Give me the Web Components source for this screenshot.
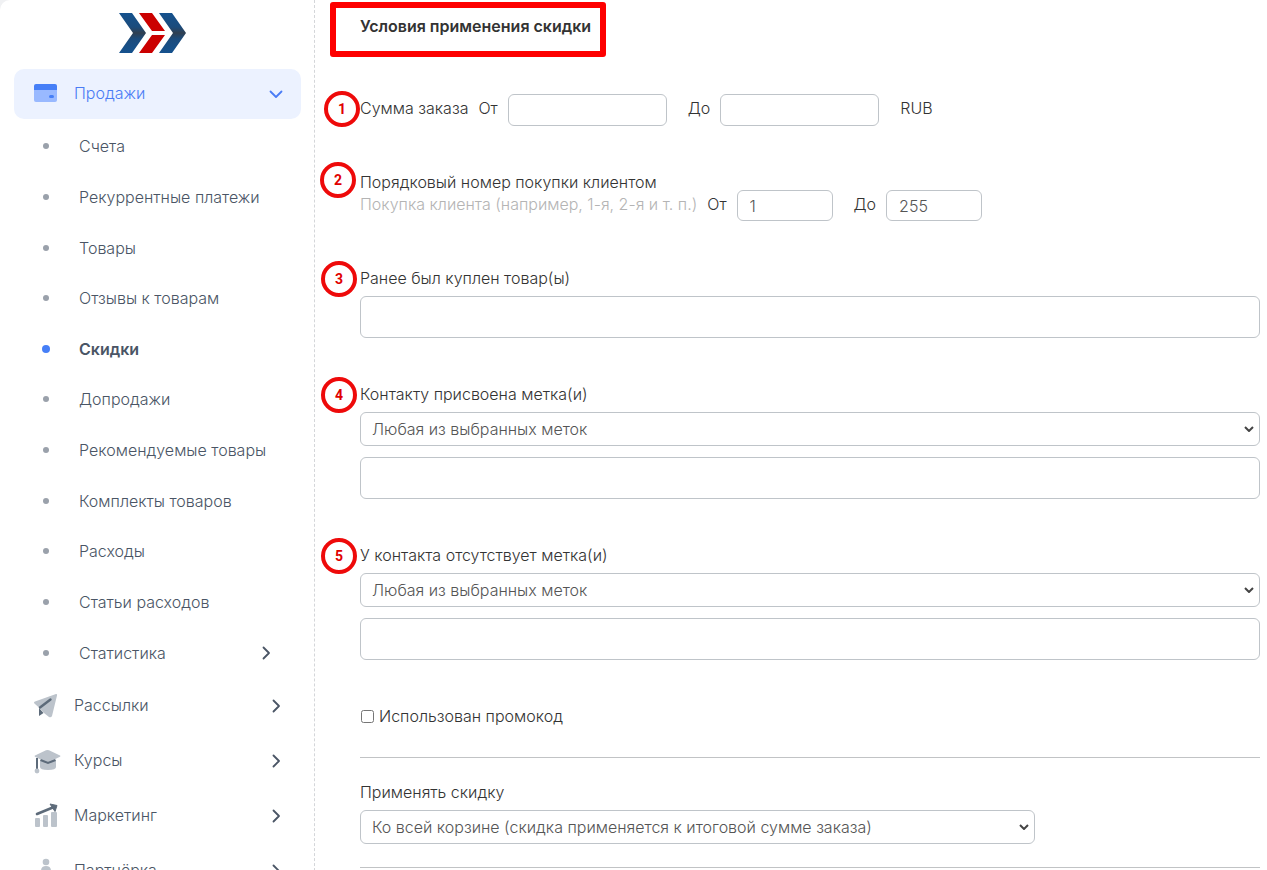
<!DOCTYPE html>
<html lang="ru">
<head>
<meta charset="utf-8">
<title>Скидки</title>
<style>
html, body { margin: 0; background: #f0f1f3; }
body { font: 350 16px/22px Inter, "Open Sans", sans-serif; color: #333; height: 100vh; overflow: hidden; }
</style>
</head>
<body>
<discount-page></discount-page>

<script>
const define = (name, html, setup) => {
  const tpl = document.createElement('template');
  tpl.innerHTML = html;
  customElements.define(name, class extends HTMLElement {
    connectedCallback() {
      if (this.shadowRoot) return;
      this.attachShadow({ mode: 'open' }).append(tpl.content.cloneNode(true));
      if (setup) setup(this, this.shadowRoot);
    }
  });
};

const ICONS = {
  wallet: '<path d="M0 8h23v11a2 2 0 0 1-2 2H2a2 2 0 0 1-2-2z" fill="#99b9ff"/><path d="M2 3h19a2 2 0 0 1 2 2v4H0V5a2 2 0 0 1 2-2z" fill="#467ff7"/><rect x="15" y="14" width="5" height="3" rx="1.500" fill="#467ff7"/>',
  plane: '<path d="M1 8.500 22 1q1.500-.3 1 1.500L18 23q-1 2-3 1l-5-4-4.500-5L1 11q-2-1.500 0-2.500z" fill="#bcc3cb"/><path d="M6 14.500 16.500 6.500" stroke="#5d6b7a" stroke-width="2.400" stroke-linecap="round"/><path d="M5 15l4.500 5L5 23z" fill="#5d6b7a"/>',
  cap: '<path d="M6 12v7q0 3 8 3t8-3v-7z" fill="#bcc3cb"/><path d="M1 7.500 12 2.300q1.500-.6 3 0L26 7.500q1 .6 0 1.200L15 14q-1.500.6-3 0L1 8.700q-1-.6 0-1.200z" fill="#bcc3cb"/><path d="M6.500 12l7.500 3 7.500-3" fill="none" stroke="#5d6b7a" stroke-width="2"/><path d="M3 10v12" stroke="#5d6b7a" stroke-width="2"/><circle cx="3" cy="23" r="2.400" fill="#bcc3cb"/>',
  chart: '<rect x="1" y="15" width="5" height="9" rx="1" fill="#bcc3cb"/><rect x="9" y="12" width="5" height="12" rx="1" fill="#bcc3cb"/><rect x="17" y="9" width="6" height="15" rx="1" fill="#bcc3cb"/><path d="M3 11 20 4" stroke="#5d6b7a" stroke-width="2.600" stroke-linecap="round"/><path d="M16 1l7 1.500-2 6z" fill="#5d6b7a" stroke="#5d6b7a" stroke-linejoin="round"/>',
  partner: '<circle cx="12" cy="4" r="3.300" fill="#bcc3cb"/><path d="M7 18v-5q0-5 5-5t5 5v5z" fill="#bcc3cb"/>'
};

define('brand-logo', `
<style>
:host { display: flex; justify-content: center; }
svg { display: block; }
</style>
<svg width="67" height="40" viewBox="0 0 67 40" role="img" aria-label="Логотип">
  <defs><linearGradient id="b" x2="0" y2="1"><stop offset="0" stop-color="#15528e"/><stop offset=".35" stop-color="#1b4b7c"/><stop offset=".5" stop-color="#303f50"/><stop offset=".65" stop-color="#1b4b7c"/><stop offset="1" stop-color="#15528e"/></linearGradient></defs>
  <path d="M0 0h13l14 20-14 20H0l14-20z" fill="url(#b)"/>
  <path d="M20 0h13l13 18H33zM33 22h13L33 40H20z" fill="#cb0000"/>
  <path d="M40 0h13l14 20-14 20H40l14-20z" fill="url(#b)"/>
</svg>`);

define('chevron-icon', `
<style>
:host { display: block; width: 14px; height: 14px; }
:host([down]) svg { transform: rotate(90deg); }
svg { display: block; }
</style>
<svg width="14" height="14" viewBox="0 0 14 14"><path d="M4.500 1.500 10 7 4.500 12.500" fill="none" stroke="currentColor" stroke-width="1.800" stroke-linecap="round" stroke-linejoin="round"/></svg>`);

define('nav-group', `
<style>
:host { display: block; color: #4a5565; }
a { display: flex; align-items: center; height: 50px; padding: 0 18px 0 20px; border-radius: 10px; color: inherit; text-decoration: none; }
:host([open]) a { background: #ecf2ff; color: #4a7cf5; }
.icon { width: 40px; height: 26px; }
.icon svg { display: block; overflow: visible; }
.label { flex: 1; height: 24px; }
</style>
<a href="#"><span class="icon"></span><span class="label"><slot></slot></span><chevron-icon></chevron-icon></a>`,
(el, root) => {
  root.querySelector('.icon').innerHTML = `<svg width="26" height="26" viewBox="0 0 26 26">${ICONS[el.getAttribute('icon')]}</svg>`;
  root.querySelector('chevron-icon').toggleAttribute('down', el.hasAttribute('open'));
});

define('nav-item', `
<style>
:host { display: grid; color: #4a5565; }
a { display: flex; align-items: center; padding: 0 28px 0 24px; color: inherit; text-decoration: none; }
.dot { width: 16px; display: flex; justify-content: center; margin-right: 25px; }
.dot::before { content: ""; width: 6px; height: 6px; border-radius: 50%; background: #9aa1ab; }
:host([current]) .dot::before { width: 8px; height: 8px; background: #467ff7; }
:host([current]) .label { font-weight: 600; }
.label { flex: 1; }
chevron-icon { display: none; }
:host([more]) chevron-icon { display: block; }
</style>
<a href="#"><span class="dot"></span><span class="label"><slot></slot></span><chevron-icon></chevron-icon></a>`);

define('side-bar', `
<style>
:host { display: block; box-sizing: border-box; padding: 13px 13px 0 14px; border-right: 1px dashed #d4d6d9; }
brand-logo { margin: 0 10px 16px 0; }
nav { display: grid; gap: 5px; }
.sub { display: grid; grid-auto-rows: 1fr; height: 557px; margin: -3px 0 -2px; }
</style>
<brand-logo></brand-logo>
<nav aria-label="Главное меню">
  <nav-group icon="wallet" open>Продажи</nav-group>
  <div class="sub">
    <nav-item>Счета</nav-item>
    <nav-item>Рекуррентные платежи</nav-item>
    <nav-item>Товары</nav-item>
    <nav-item>Отзывы к товарам</nav-item>
    <nav-item current>Скидки</nav-item>
    <nav-item>Допродажи</nav-item>
    <nav-item>Рекомендуемые товары</nav-item>
    <nav-item>Комплекты товаров</nav-item>
    <nav-item>Расходы</nav-item>
    <nav-item>Статьи расходов</nav-item>
    <nav-item more>Статистика</nav-item>
  </div>
  <nav-group icon="plane">Рассылки</nav-group>
  <nav-group icon="cap">Курсы</nav-group>
  <nav-group icon="chart">Маркетинг</nav-group>
  <nav-group icon="partner">Партнёрка</nav-group>
</nav>`);

define('step-badge', `
<style>
:host { position: absolute; left: -39px; top: -6px; box-sizing: border-box; width: 36px; height: 36px; border: 4px solid #ee0a0a; border-radius: 50%; background: #fff; display: flex; align-items: center; justify-content: center; font: 700 14px/20px Roboto, sans-serif; color: #e00000; }
</style>
<slot></slot>`);

const CONTROLS = `
input, select { box-sizing: border-box; margin: 0; border: 1px solid #bfc4c9; border-radius: 6px; background: #fff; color: #555; font: inherit; }
`;

define('range-field', `
<style>
:host { display: flex; align-items: flex-start; line-height: 28px; }
${CONTROLS}
label { margin-right: 10px; }
input { height: 32px; width: 159px; padding: 0 12px; margin-right: 21px; }
:host([compact]) input { height: 31px; width: 96px; }
slot[name=title] { display: block; }
::slotted([slot=title]) { margin-right: 10px; }
</style>
<slot name="title"></slot>
<label for="from">От</label><input id="from" type="text" inputmode="numeric">
<label for="to">До</label><input id="to" type="text" inputmode="numeric">
<slot></slot>`,
(el, root) => {
  root.getElementById('from').value = el.getAttribute('from') || '';
  root.getElementById('to').value = el.getAttribute('to') || '';
});

define('form-field', `
<style>
:host { display: block; }
${CONTROLS}
label { display: block; margin-bottom: 7px; }
select { display: block; width: 100%; height: 34px; padding: 0 24px 0 11px; appearance: none; background: #fff url("data:image/svg+xml,%3Csvg xmlns='http://www.w3.org/2000/svg' width='10' height='6'%3E%3Cpath d='M1 1l4 4 4-4' fill='none' stroke='%23444' stroke-width='2'/%3E%3C/svg%3E") no-repeat right 5px center; }
input { display: block; width: 100%; height: 42px; padding: 0 12px; }
select + input { margin-top: 11px; }
:host([short]) select { width: 75%; }
</style>
<label for="control"><slot></slot></label>`,
(el, root) => {
  const option = el.getAttribute('option');
  if (option) {
    const select = document.createElement('select');
    select.id = 'control';
    select.add(new Option(option));
    root.append(select);
  }
  if (!el.hasAttribute('short')) {
    const input = document.createElement('input');
    input.type = 'text';
    if (option) input.setAttribute('aria-label', 'Метки'); else input.id = 'control';
    root.append(input);
  }
});

define('discount-form', `
<style>
:host { display: block; padding: 2px 7px 0 45px; }
h2 { width: max-content; box-sizing: border-box; margin: 0 0 37px -30px; height: 55px; padding: 7px 9px 0 24px; border: 6px solid #fe0000; border-radius: 3px; font: inherit; font-weight: 600; color: #333; }
section { position: relative; margin-bottom: 45px; }
.order { margin-bottom: 46px; }
.hint { color: #b4b4b4; }
.order range-field { margin-top: -3px; }
.check { display: flex; align-items: center; gap: 5px; margin-bottom: 29px; }
.check input { width: 13px; height: 13px; margin: 0 0 0 1px; }
hr { margin: 0 0 23px; border: 0; border-top: 1px solid #c1c3c5; }
.check + hr { margin-top: 30px; }
.check { margin-bottom: 0; }
.apply { margin-bottom: 23px; }
step-badge.first { left: -36px; top: -3px; }
step-badge.second { left: -40px; top: -9px; }
</style>
<h2>Условия применения скидки</h2>
<section><step-badge class="first">1</step-badge>
  <range-field><span slot="title">Сумма заказа</span>RUB</range-field></section>
<section class="order"><step-badge class="second">2</step-badge>
  <div>Порядковый номер покупки клиентом</div>
  <range-field compact from="1" to="255"><span slot="title" class="hint">Покупка клиента (например, 1-я, 2-я и т. п.)</span></range-field></section>
<section><step-badge>3</step-badge><form-field>Ранее был куплен товар(ы)</form-field></section>
<section><step-badge>4</step-badge><form-field option="Любая из выбранных меток">Контакту присвоена метка(и)</form-field></section>
<section><step-badge>5</step-badge><form-field option="Любая из выбранных меток">У контакта отсутствует метка(и)</form-field></section>
<div class="check"><input type="checkbox" id="promo"><label for="promo">Использован промокод</label></div>
<hr>
<form-field class="apply" short option="Ко всей корзине (скидка применяется к итоговой сумме заказа)">Применять скидку</form-field>
<hr>`);

define('discount-page', `
<style>
:host { display: grid; grid-template-columns: 315px minmax(0, 1fr); min-height: 100vh; background: #fff; border-top-left-radius: 10px; }
main { min-width: 0; }
</style>
<side-bar></side-bar>
<main><discount-form></discount-form></main>`);
</script>
</body>
</html>
